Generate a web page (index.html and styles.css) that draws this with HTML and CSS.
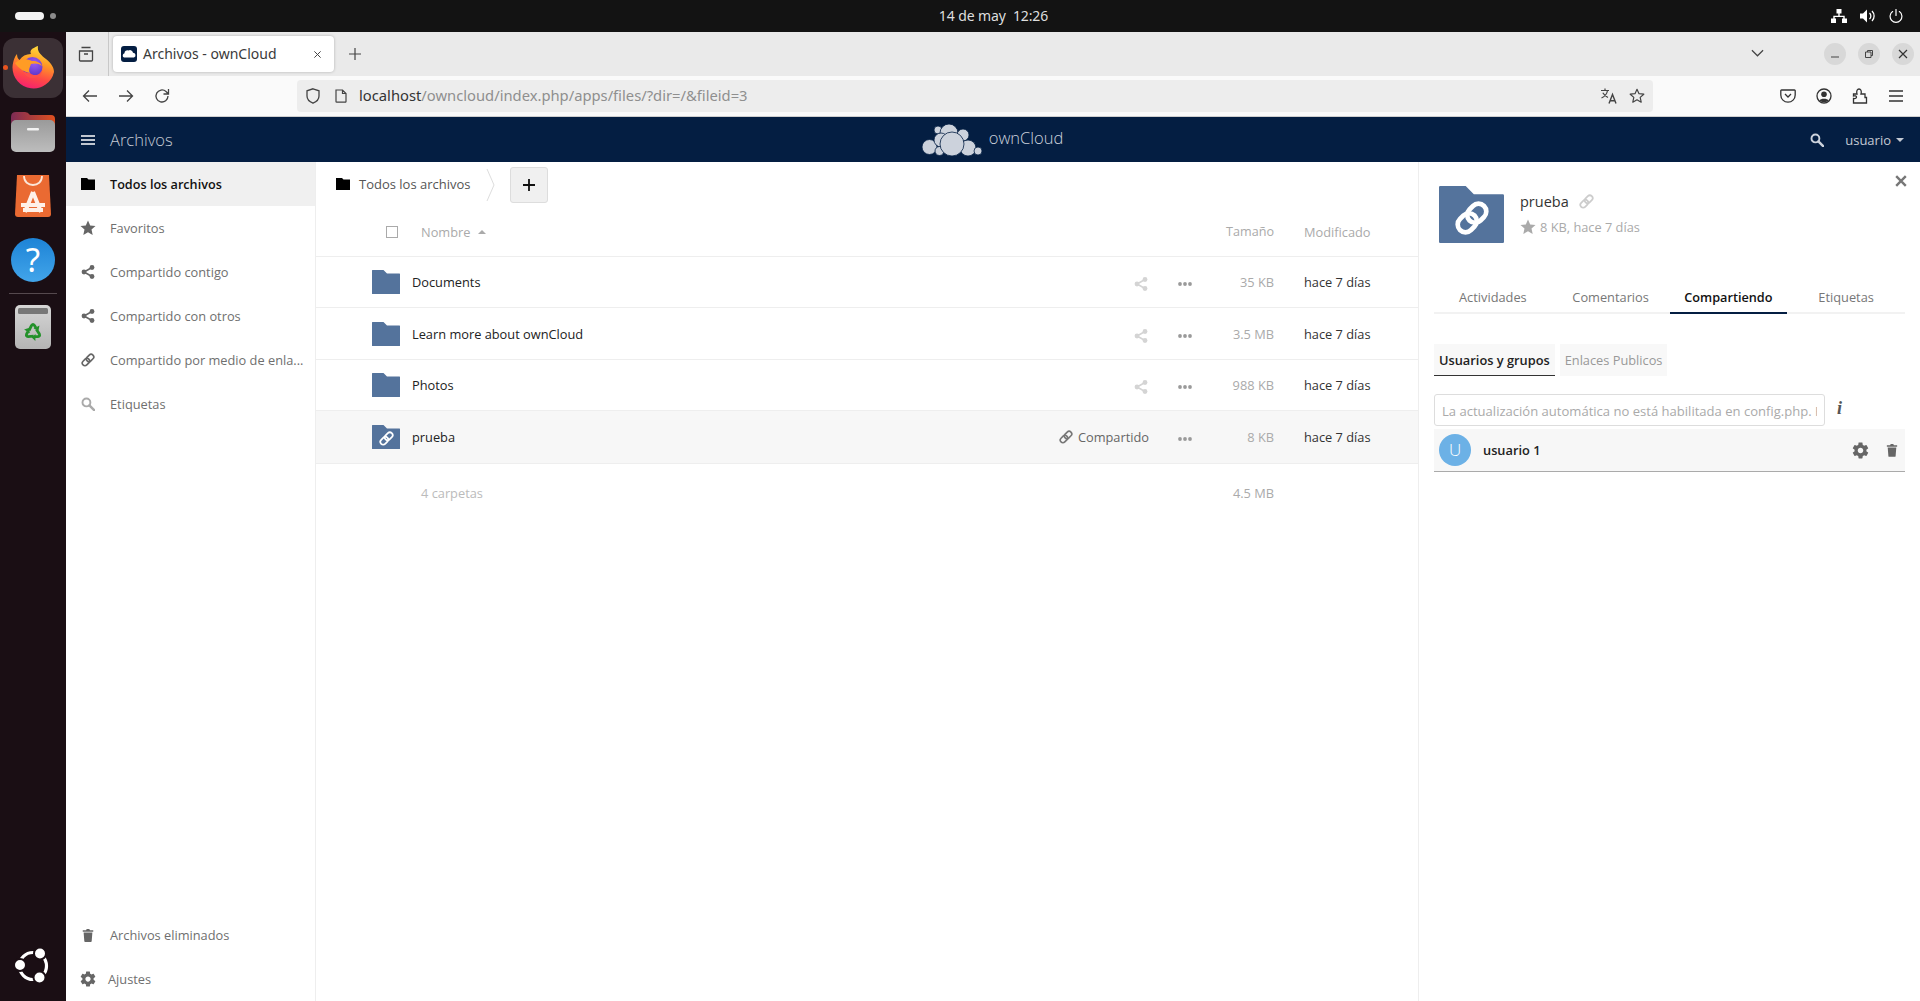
FILE: index.html
```html
<!DOCTYPE html>
<html lang="es">
<head>
<meta charset="utf-8">
<title>Archivos - ownCloud</title>
<link rel="stylesheet" href="styles.css">
</head>
<body>
<svg class="defs" width="0" height="0">
  <defs>
    <symbol id="i-folder" viewBox="0 0 14 12"><path d="M0 0H6L7.5 1.5H14V12H0Z" fill="currentColor"/></symbol>
    <symbol id="i-star" viewBox="0 0 16 16"><path d="M8 .5l2.2 5 5.3.5-4 3.6 1.2 5.4L8 12.2 3.3 15l1.2-5.4-4-3.6 5.3-.5Z" fill="currentColor"/></symbol>
    <symbol id="i-share" viewBox="0 0 14 14"><path d="M11 2.5 3 7l8 4.5" fill="none" stroke="currentColor" stroke-width="1.6"/><circle cx="11" cy="2.5" r="2.4" fill="currentColor"/><circle cx="3" cy="7" r="2.4" fill="currentColor"/><circle cx="11" cy="11.5" r="2.4" fill="currentColor"/></symbol>
    <symbol id="i-link" viewBox="0 0 24 24"><g transform="rotate(-45 12 12)" fill="none" stroke="currentColor" stroke-width="2.8"><rect x="0" y="7.5" width="14" height="9" rx="4.5"/><rect x="10" y="7.5" width="14" height="9" rx="4.5"/></g></symbol>
    <symbol id="i-link-bold" viewBox="0 0 24 24"><g transform="rotate(-45 12 12)" fill="none" stroke="currentColor" stroke-width="3.300"><rect x="0" y="6.500" width="14.500" height="11" rx="5.500"/><rect x="9.500" y="6.500" width="14.500" height="11" rx="5.500"/></g></symbol>
    <symbol id="i-search" viewBox="0 0 16 16"><circle cx="6.2" cy="6.2" r="4.5" fill="none" stroke="currentColor" stroke-width="2.2"/><path d="M9.6 9.6 15 15" stroke="currentColor" stroke-width="2.8" stroke-linecap="round"/></symbol>
    <symbol id="i-trash" viewBox="0 0 14 16"><path d="M1 2.5H4.8L5.5 1H8.5L9.2 2.5H13V4.2H1ZM2 5.2H12L11.2 15.2Q11.1 16 10.3 16H3.7Q2.9 16 2.8 15.2Z" fill="currentColor"/></symbol>
    <symbol id="i-gear" viewBox="0 0 24 24"><path d="M19.43 12.98c.04-.32.07-.64.07-.98s-.03-.66-.07-.98l2.11-1.65c.19-.15.24-.42.12-.64l-2-3.46c-.12-.22-.39-.3-.61-.22l-2.49 1c-.52-.4-1.08-.73-1.69-.98l-.38-2.65C14.46 2.18 14.25 2 14 2h-4c-.25 0-.46.18-.49.42l-.38 2.65c-.61.25-1.17.59-1.69.98l-2.49-1c-.23-.09-.49 0-.61.22l-2 3.46c-.13.22-.07.49.12.64l2.11 1.65c-.04.32-.07.65-.07.98s.03.66.07.98l-2.11 1.65c-.19.15-.24.42-.12.64l2 3.46c.12.22.39.3.61.22l2.49-1c.52.4 1.08.73 1.69.98l.38 2.65c.03.24.24.42.49.42h4c.25 0 .46-.18.49-.42l.38-2.65c.61-.25 1.17-.59 1.69-.98l2.49 1c.23.09.49 0 .61-.22l2-3.46c.12-.22.07-.49-.12-.64l-2.11-1.65zM12 15.5c-1.93 0-3.5-1.57-3.5-3.5s1.57-3.5 3.5-3.5 3.5 1.57 3.5 3.5-1.57 3.5-3.5 3.5z" fill="currentColor"/></symbol>
    <symbol id="i-dots" viewBox="0 0 14 4"><circle cx="2" cy="2" r="1.9" fill="currentColor"/><circle cx="7" cy="2" r="1.9" fill="currentColor"/><circle cx="12" cy="2" r="1.9" fill="currentColor"/></symbol>
    <symbol id="i-bigfolder" viewBox="0 0 28 24" preserveAspectRatio="none"><path d="M0 .5Q0 0 .5 0H11.5L15 3.5H27.5Q28 3.5 28 4V23.5Q28 24 27.5 24H.5Q0 24 0 23.5Z" fill="#54739c"/></symbol>
    <symbol id="i-recycle-arm" viewBox="0 0 20 20"><path d="M6 8.500 8.500 3.500Q10 1.500 11.500 3.500L13 6" fill="none" stroke="#23912a" stroke-width="2.800"/><path d="M10.500 6.800 15.500 8.300 16.500 3.500Z" fill="#23912a"/></symbol>
    <linearGradient id="ff-body" x1=".7" y1="0" x2=".4" y2="1"><stop offset="0" stop-color="#ffe23f"/><stop offset=".38" stop-color="#ff9a25"/><stop offset=".72" stop-color="#ff4a45"/><stop offset="1" stop-color="#f5216f"/></linearGradient>
    <radialGradient id="ff-globe" cx=".6" cy=".3" r=".85"><stop offset="0" stop-color="#9c5cf5"/><stop offset="1" stop-color="#4a2ab8"/></radialGradient>
    <linearGradient id="files-back" x1="0" y1="0" x2="1" y2="0"><stop offset="0" stop-color="#7c2b55"/><stop offset="1" stop-color="#e0501f"/></linearGradient>
    <linearGradient id="files-front" x1="0" y1="0" x2="0" y2="1"><stop offset="0" stop-color="#9a9a9a"/><stop offset="1" stop-color="#bdbdbd"/></linearGradient>
    <linearGradient id="bin-bg" x1="0" y1="0" x2="0" y2="1"><stop offset="0" stop-color="#d6d6d6"/><stop offset="1" stop-color="#b4b4b4"/></linearGradient>
  </defs>
</svg>

<header class="topbar">
  <div class="workspaces"><span class="ws-pill"></span><span class="ws-dot"></span></div>
  <div class="clock">14 de may&nbsp;&nbsp;12:26</div>
  <div class="tray">
    <svg class="tray-net" viewBox="0 0 16 14"><path d="M5.5 0h5v4.5h-5ZM0 9.5h5V14H0ZM11 9.5h5V14h-5ZM7.3 4.5h1.4v2.2h5V9.5h-1.4V8H3.7v1.5H2.3V6.7h5Z" fill="#fff"/></svg>
    <svg class="tray-vol" viewBox="0 0 16 14"><path d="M0 4.5H3L7 .5V13.500L3 9.500H0Z" fill="#fff"/><path d="M9.500 4a4 4 0 0 1 0 6M12 2a7 7 0 0 1 0 10" fill="none" stroke="#fff" stroke-width="1.300"/></svg>
    <svg class="tray-pow" viewBox="0 0 14 14"><path d="M7 .5V6.500M3.600 2.600a5.900 5.900 0 1 0 6.800 0" fill="none" stroke="#fff" stroke-width="1.200" stroke-linecap="round"/></svg>
  </div>
</header>

<div class="desktop">
  <nav class="dock">
    <div class="dock-active">
      <span class="dock-run"></span>
      <svg class="dock-ff" viewBox="0 0 44 44">
        <path d="M1.500 21C2 15 4 10 6 8C6 11 7 13 8.500 14C11 10 15 8 20 8C18 4 22 2 27 0C26 6 30 9 35 13C41 18 43 22 43 26A21 21 0 0 1 1.500 21Z" fill="url(#ff-body)"/>
        <circle cx="21.500" cy="21" r="10" fill="url(#ff-globe)"/>
        <path d="M4 17C8 13 15 12 21 15C26 15 30 17 31 20C28 17 23 17 20 18C19 21 17 24 19 27C13 26 7 22 4 17Z" fill="#ff9c25"/>
        <path d="M19 27C23 31 30 29 31.500 23C31 29 27 32 22 32C17 32 13 29 12 25C14 26 17 27 19 27Z" fill="#ff4f4a"/>
      </svg>
    </div>
    <svg class="dock-files" viewBox="0 0 44 40"><path d="M0 5Q0 0 5 0H14Q17 0 19 3H40Q44 3 44 7V16H0Z" fill="url(#files-back)"/><rect y="8" width="44" height="32" rx="5" fill="url(#files-front)"/><rect x="16" y="16" width="12" height="2.500" rx="1" fill="#f2f2f2"/></svg>
    <svg class="dock-store" viewBox="0 0 36 42"><path d="M2 0H34L36 39Q36 42 33 42H3Q0 42 0 39Z" fill="#ea6a32"/><path d="M9 1C9 13 27 13 27 1" fill="none" stroke="#fbe6d8" stroke-width="1.800"/><path d="M18 17 26 37M18 17 10 37M6 30H30M8 35H28" fill="none" stroke="#fff1e8" stroke-width="4"/></svg>
    <div class="dock-help">?</div>
    <div class="dock-sep"></div>
    <svg class="dock-bin" viewBox="0 0 36 44">
      <rect width="36" height="44" rx="5" fill="url(#bin-bg)"/>
      <rect x="3" y="3" width="30" height="6" rx="1.500" fill="#777"/>
      <use href="#i-recycle-arm" x="8" y="17" width="20" height="20"/>
      <use href="#i-recycle-arm" x="8" y="17" width="20" height="20" transform="rotate(120 18 27)"/>
      <use href="#i-recycle-arm" x="8" y="17" width="20" height="20" transform="rotate(240 18 27)"/>
    </svg>
    <svg class="dock-ubuntu" viewBox="0 0 36 36"><circle cx="18" cy="18" r="13.500" fill="none" stroke="#fff" stroke-width="3.200"/><circle cx="25" cy="5.500" r="6" fill="#fff" stroke="#1a0e14" stroke-width="2"/><circle cx="24.500" cy="29.500" r="6" fill="#fff" stroke="#1a0e14" stroke-width="2"/><circle cx="5" cy="17" r="6" fill="#fff" stroke="#1a0e14" stroke-width="2"/></svg>
  </nav>

  <main class="browser">
    <div class="tabbar">
      <div class="view-btn">
        <svg class="ic16" viewBox="0 0 16 16"><path d="M3.500 1.500h9M1.500 5h13v9a1 1 0 0 1-1 1h-11a1 1 0 0 1-1-1ZM6 8h4" fill="none" stroke="#444" stroke-width="1.300"/></svg>
      </div>
      <div class="tab">
        <svg class="favicon" viewBox="0 0 16 16"><rect width="16" height="16" rx="3" fill="#041e42"/><path d="M3 11.500a2.300 2.300 0 0 1 .5-4.300 2.800 2.800 0 0 1 4-2.700 3 3 0 0 1 4.500 2.200 2.500 2.500 0 0 1 1 4.800Z" fill="#fff"/></svg>
        <span class="tab-title">Archivos - ownCloud</span>
        <svg class="tab-x" viewBox="0 0 10 10"><path d="M1.500 1.500l7 7M8.500 1.500l-7 7" stroke="#444" stroke-width="1.100"/></svg>
      </div>
      <svg class="tab-new" viewBox="0 0 12 12"><path d="M6 0v12M0 6h12" stroke="#444" stroke-width="1.200"/></svg>
      <svg class="tab-list" viewBox="0 0 14 8"><path d="M1 1l6 6 6-6" fill="none" stroke="#444" stroke-width="1.300"/></svg>
      <div class="win-btns">
        <span class="win-btn"><svg viewBox="0 0 10 10"><path d="M1 8h8" stroke="#444" stroke-width="1"/></svg></span>
        <span class="win-btn"><svg viewBox="0 0 10 10"><path d="M1.500 3h5.500v5.500H1.500ZM3.500 3V1.500H8.500V6.500H7" fill="none" stroke="#444" stroke-width="1"/></svg></span>
        <span class="win-btn"><svg viewBox="0 0 10 10"><path d="M1 1l8 8M9 1l-8 8" stroke="#333" stroke-width="1.200"/></svg></span>
      </div>
    </div>

    <div class="toolbar">
      <svg class="tb-ic" viewBox="0 0 16 16"><path d="M15 8H1.500M7 2.500 1.500 8 7 13.500" fill="none" stroke="#444" stroke-width="1.300"/></svg>
      <svg class="tb-ic" viewBox="0 0 16 16"><path d="M1 8h13.500M9 2.500 14.500 8 9 13.500" fill="none" stroke="#444" stroke-width="1.300"/></svg>
      <svg class="tb-ic" viewBox="0 0 16 16"><path d="M14 8a6 6 0 1 1-2-4.500L14.500 6M14.500 1V6H9.500" fill="none" stroke="#444" stroke-width="1.300"/></svg>
      <div class="urlbar">
        <svg class="url-shield" viewBox="0 0 14 16"><path d="M7 .8 13 2.800V8c0 3.500-3 6-6 7.200C4 14 1 11.500 1 8V2.800Z" fill="none" stroke="#444" stroke-width="1.300"/></svg>
        <svg class="url-page" viewBox="0 0 12 14"><path d="M1 1H7.500L11 4.500V12.500a.7.7 0 0 1-.7.7H1.700A.7.7 0 0 1 1 12.500ZM7.500 1V4.500H11" fill="none" stroke="#444" stroke-width="1.200"/></svg>
        <span class="url-text"><span class="url-host">localhost</span>/owncloud/index.php/apps/files/?dir=/&amp;fileid=3</span>
        <svg class="url-trans" viewBox="0 0 16 16"><path d="M0 2.500H8M4 .5V2.500M6.500 2.500C6 6 3.500 8.500.5 10M1.800 4.800C3 7 5 8.500 7 9.500" fill="none" stroke="#444" stroke-width="1.200"/><path d="M8 15.500 11.500 6.500 15 15.500M9.200 12.800H13.800" fill="none" stroke="#444" stroke-width="1.400"/></svg>
        <svg class="url-star" viewBox="0 0 16 16"><path d="M8 1.300l2 4.400 4.800.5-3.600 3.200 1 4.800L8 11.800l-4.200 2.400 1-4.800L1.200 6.200 6 5.700Z" fill="none" stroke="#444" stroke-width="1.200" stroke-linejoin="round"/></svg>
      </div>
      <div class="tb-right">
        <svg class="tb-ic" viewBox="0 0 16 16"><path d="M1.500 2H14.500a.7.7 0 0 1 .7.7V7A7.200 7.200 0 0 1 .8 7V2.700A.7.700 0 0 1 1.500 2Z" fill="none" stroke="#333" stroke-width="1.300"/><path d="M5 6l3 3 3-3" fill="none" stroke="#333" stroke-width="1.300"/></svg>
        <svg class="tb-ic" viewBox="0 0 16 16"><circle cx="8" cy="8" r="7" fill="none" stroke="#333" stroke-width="1.300"/><circle cx="8" cy="6.300" r="2.800" fill="#333"/><path d="M3.300 12.500C4.500 10 11.500 10 12.700 12.500 11 14.500 5 14.500 3.300 12.500Z" fill="#333"/></svg>
        <svg class="tb-ic" viewBox="0 0 16 16"><path d="M1.500 6H5C4 2.500 5.500 1 7 1s3 1.500 2 5h4v3.500h1.500V15H1.500V10.500C3.500 11 4.500 10 4.500 9S3 7.500 1.500 8Z" fill="none" stroke="#333" stroke-width="1.300"/></svg>
        <svg class="tb-ic" viewBox="0 0 16 16"><path d="M1 3h14M1 8h14M1 13h14" stroke="#333" stroke-width="1.300"/></svg>
      </div>
    </div>

    <div class="oc-header">
      <svg class="oc-burger" viewBox="0 0 14 10"><path d="M0 1h14M0 5h14M0 9h14" stroke="#fff" stroke-width="1.700"/></svg>
      <span class="oc-app">Archivos</span>
      <div class="oc-logo">
        <svg class="oc-cloud" viewBox="0 0 62 32">
          <g fill="#ccd2dc" stroke="#041e42" stroke-width=".8">
            <circle cx="16" cy="6" r="4"/><circle cx="27" cy="9" r="9"/><circle cx="41" cy="11" r="6"/>
            <circle cx="7.500" cy="23" r="7.500"/><circle cx="19" cy="16" r="7"/><circle cx="17.500" cy="27" r="4.500"/>
            <circle cx="46" cy="24" r="8"/><circle cx="56" cy="27" r="4"/><circle cx="30" cy="20" r="12"/>
          </g>
        </svg>
        <span class="oc-brand">ownCloud</span>
      </div>
      <div class="oc-user">
        <svg class="oc-search" viewBox="0 0 16 16"><use href="#i-search"/></svg>
        <span class="oc-username">usuario</span>
        <span class="caret-down"></span>
      </div>
    </div>

    <div class="oc-body">
      <aside class="side">
        <ul class="nav">
          <li class="nav-item active"><svg class="nav-ic ic-folder"><use href="#i-folder"/></svg><span>Todos los archivos</span></li>
          <li class="nav-item"><svg class="nav-ic nav-ic-star"><use href="#i-star"/></svg><span>Favoritos</span></li>
          <li class="nav-item"><svg class="nav-ic"><use href="#i-share"/></svg><span>Compartido contigo</span></li>
          <li class="nav-item"><svg class="nav-ic"><use href="#i-share"/></svg><span>Compartido con otros</span></li>
          <li class="nav-item"><svg class="nav-ic"><use href="#i-link"/></svg><span class="nav-trunc">Compartido por medio de enla...</span></li>
          <li class="nav-item"><svg class="nav-ic ic-faint"><use href="#i-search"/></svg><span>Etiquetas</span></li>
        </ul>
        <ul class="nav">
          <li class="nav-item"><svg class="nav-ic"><use href="#i-trash"/></svg><span>Archivos eliminados</span></li>
          <li class="nav-item nav-settings"><svg class="nav-ic nav-ic-gear"><use href="#i-gear"/></svg><span>Ajustes</span></li>
        </ul>
      </aside>

      <section class="files">
        <div class="crumbs">
          <svg class="crumb-ic"><use href="#i-folder"/></svg>
          <span class="crumb-text">Todos los archivos</span>
          <svg class="crumb-sep" viewBox="0 0 9 34"><path d="M1 1 8 17 1 33" fill="none" stroke="#ddd" stroke-width="1"/></svg>
          <button class="add-btn" type="button"><svg viewBox="0 0 12 12"><path d="M6 0v12M0 6h12" stroke="#111" stroke-width="1.800"/></svg></button>
        </div>
        <div class="thead">
          <span class="check"></span>
          <span class="th-name">Nombre</span><span class="caret-up"></span>
          <span class="th-size">Tamaño</span>
          <span class="th-date">Modificado</span>
        </div>
        <div class="rows">
          <div class="row">
            <svg class="row-folder"><use href="#i-bigfolder"/></svg>
            <span class="row-name">Documents</span>
            <svg class="row-share"><use href="#i-share"/></svg>
            <svg class="row-dots"><use href="#i-dots"/></svg>
            <span class="row-size">35 KB</span>
            <span class="row-date">hace 7 días</span>
          </div>
          <div class="row">
            <svg class="row-folder"><use href="#i-bigfolder"/></svg>
            <span class="row-name">Learn more about ownCloud</span>
            <svg class="row-share"><use href="#i-share"/></svg>
            <svg class="row-dots"><use href="#i-dots"/></svg>
            <span class="row-size">3.5 MB</span>
            <span class="row-date">hace 7 días</span>
          </div>
          <div class="row">
            <svg class="row-folder"><use href="#i-bigfolder"/></svg>
            <span class="row-name">Photos</span>
            <svg class="row-share"><use href="#i-share"/></svg>
            <svg class="row-dots"><use href="#i-dots"/></svg>
            <span class="row-size">988 KB</span>
            <span class="row-date">hace 7 días</span>
          </div>
          <div class="row row-selected">
            <span class="row-folder folder-linked">
              <svg class="row-folder"><use href="#i-bigfolder"/></svg>
              <svg class="folder-chain"><use href="#i-link"/></svg>
            </span>
            <span class="row-name">prueba</span>
            <span class="row-shared"><svg class="shared-ic"><use href="#i-link"/></svg>Compartido</span>
            <svg class="row-dots"><use href="#i-dots"/></svg>
            <span class="row-size">8 KB</span>
            <span class="row-date">hace 7 días</span>
          </div>
        </div>
        <div class="tfoot">
          <span class="foot-name">4 carpetas</span>
          <span class="foot-size">4.5 MB</span>
        </div>
      </section>

      <aside class="details">
        <div class="det-head">
          <span class="det-folder">
            <svg class="det-folder-svg"><use href="#i-bigfolder"/></svg>
            <svg class="det-chain"><use href="#i-link-bold"/></svg>
          </span>
          <div class="det-info">
            <div class="det-title"><span>prueba</span><svg class="det-title-link"><use href="#i-link"/></svg></div>
            <div class="det-meta"><svg class="det-star"><use href="#i-star"/></svg><span>8 KB, hace 7 días</span></div>
          </div>
          <svg class="det-close" viewBox="0 0 10 10"><path d="M1 1l8 8M9 1l-8 8" stroke="#777" stroke-width="2"/></svg>
        </div>
        <div class="det-tabs">
          <span class="det-tab">Actividades</span>
          <span class="det-tab">Comentarios</span>
          <span class="det-tab on">Compartiendo</span>
          <span class="det-tab">Etiquetas</span>
        </div>
        <div class="sub-tabs">
          <span class="sub-tab on">Usuarios y grupos</span>
          <span class="sub-tab">Enlaces Publicos</span>
        </div>
        <div class="share-input-row">
          <input class="share-input" type="text" placeholder="La actualización automática no está habilitada en config.php. Para activarla">
          <span class="share-info">i</span>
        </div>
        <div class="sharee">
          <span class="avatar">U</span>
          <span class="sharee-name">usuario 1</span>
          <svg class="sharee-gear"><use href="#i-gear"/></svg>
          <svg class="sharee-trash"><use href="#i-trash"/></svg>
        </div>
      </aside>
    </div>
  </main>
</div>
</body>
</html>
```
FILE: styles.css
```css
* { box-sizing: border-box; }
html, body { margin: 0; padding: 0; height: 1001px; overflow: hidden; }
body { display: flex; flex-direction: column; font-family: "Open Sans", "Noto Sans", sans-serif; background: #fff; }
ul { list-style: none; margin: 0; padding: 0; }
.defs { display: block; height: 0; width: 0; overflow: hidden; }

/* GNOME top bar */
.topbar { height: 32px; flex: none; background: #131313; display: grid; grid-template-columns: 1fr auto 1fr; align-items: center; padding: 0 17px 0 66px; }
.workspaces { display: flex; align-items: center; gap: 6px; margin-left: -51px; }
.ws-pill { width: 29px; height: 8px; border-radius: 4px; background: #f4f4f4; }
.ws-dot { width: 6px; height: 6px; border-radius: 50%; background: #8c8c8c; }
.clock { font-family: "Noto Sans", sans-serif; font-size: 14px; color: #dedede; letter-spacing: -.1px; margin: 0 0 2px 18px; }
.tray { display: flex; justify-content: flex-end; align-items: center; gap: 13px; }
.tray-net { width: 16px; height: 14px; }
.tray-vol { width: 16px; height: 14px; }
.tray-pow { width: 14px; height: 14px; }

.desktop { flex: 1; display: flex; min-height: 0; }

/* Dock */
.dock { width: 66px; flex: none; background: #1a0e14; display: flex; flex-direction: column; align-items: center; padding-top: 6px; }
.dock-active { position: relative; width: 60px; height: 60px; border-radius: 12px; background: #3b3035; display: flex; align-items: center; justify-content: center; }
.dock-run { position: absolute; left: 0; top: 27px; width: 5px; height: 5px; border-radius: 50%; background: #e95420; }
.dock-ff { width: 44px; height: 44px; }
.dock-files { width: 44px; height: 40px; margin-top: 14px; }
.dock-store { width: 36px; height: 42px; margin-top: 23px; }
.dock-help { width: 44px; height: 44px; margin-top: 21px; border-radius: 50%; background: linear-gradient(#1d83d6, #42a5ea); color: #fff; font-family: "Noto Sans", sans-serif; font-size: 33px; line-height: 44px; text-align: center; }
.dock-sep { width: 48px; height: 1px; margin-top: 11px; background: #55494e; }
.dock-bin { width: 36px; height: 44px; margin-top: 11px; }
.dock-ubuntu { width: 36px; height: 36px; margin-top: auto; margin-bottom: 17px; }

/* Browser chrome */
.browser { flex: 1; min-width: 0; display: flex; flex-direction: column; }
.tabbar { height: 44px; flex: none; background: #eaeaea; display: flex; align-items: center; }
.view-btn { width: 43px; height: 44px; border-right: 1px solid #c8c8c8; display: flex; align-items: center; justify-content: center; padding-right: 2px; }
.ic16 { width: 16px; height: 16px; }
.tab { width: 221px; height: 36px; margin-left: 4px; background: #fff; border-radius: 4px; box-shadow: 0 0 3px rgba(0,0,0,.25); display: flex; align-items: center; padding: 0 12px 0 8px; }
.favicon { width: 16px; height: 16px; flex: none; }
.tab-title { margin-left: 6px; margin-bottom: 2px; flex: 1; font-family: "Noto Sans", sans-serif; font-size: 14px; color: #3a3a3a; }
.tab-x { width: 9px; height: 9px; }
.tab-new { width: 12px; height: 12px; margin-left: 15px; }
.tab-list { width: 13px; height: 8px; margin-left: auto; margin-bottom: 2px; }
.win-btns { display: flex; gap: 12px; margin: 0 6px 0 60px; }
.win-btn { width: 22px; height: 22px; border-radius: 50%; background: #d8d8d8; display: flex; align-items: center; justify-content: center; }
.win-btn svg { width: 10px; height: 10px; }

.toolbar { height: 41px; flex: none; background: #fafafa; border-bottom: 1px solid #cfcfcf; display: flex; align-items: center; padding: 0 16px 1px 16px; }
.tb-ic { width: 16px; height: 16px; flex: none; }
.toolbar > .tb-ic { margin-right: 20px; }
.urlbar { width: 1356px; height: 32px; margin-left: 107px; background: #ededed; border-radius: 4px; display: flex; align-items: center; padding: 0 8px 0 9px; }
.url-shield { width: 14px; height: 16px; }
.url-page { width: 12px; height: 14px; margin-left: 15px; }
.url-text { margin: 0 0 2px 12px; flex: 1; font-family: "Noto Sans", sans-serif; font-size: 14.750px; color: #8f8f8f; }
.url-host { color: #333; }
.url-trans { width: 16px; height: 16px; }
.url-star { width: 16px; height: 16px; margin-left: 12px; }
.tb-right { display: flex; gap: 20px; margin-left: auto; }

/* ownCloud header */
.oc-header { height: 45px; flex: none; background: #041e42; display: grid; grid-template-columns: 1fr auto 1fr; align-items: center; padding: 0 16px 0 15px; }
.oc-burger { width: 14px; height: 10px; grid-column: 1; grid-row: 1; }
.oc-app { grid-column: 1; grid-row: 1; margin-left: 29px; font-size: 16.500px; font-weight: 300; color: #c4cad4; }
.oc-logo { grid-column: 2; grid-row: 1; display: flex; align-items: center; gap: 5px; }
.oc-cloud { width: 62px; height: 32px; }
.oc-brand { font-size: 16.500px; font-weight: 300; color: #ccd2dc; margin-bottom: 4px; }
.oc-user { grid-column: 3; grid-row: 1; display: flex; align-items: center; justify-content: flex-end; color: #c4cad4; }
.oc-search { width: 14px; height: 14px; color: #ccd2dc; margin-right: 21px; }
.oc-username { font-size: 13px; }
.caret-down { width: 0; height: 0; border: 4px solid transparent; border-top-color: #c4cad4; border-bottom: 0; margin-left: 5px; }

/* ownCloud body */
.oc-body { flex: 1; min-height: 0; display: flex; }
.side { width: 250px; flex: none; border-right: 1px solid #eee; display: flex; flex-direction: column; justify-content: space-between; }
.nav-item { height: 44px; display: flex; align-items: center; padding-left: 15px; font-size: 12.800px; color: #6f6f6f; }
.nav-item > span { margin-left: 15px; white-space: nowrap; }
.nav-item.active { background: #f0f0f0; color: #111; font-weight: 600; font-size: 12.650px; }
.nav-ic { width: 14px; height: 14px; flex: none; color: #666; }
.nav-item.active .nav-ic { color: #000; }
.nav-ic-star { width: 16px; height: 16px; margin: 0 -1px; }
.nav-ic-gear { width: 18px; height: 18px; margin: 0 -2px; }
.ic-faint { color: #aaa; }
.nav-settings > span { margin-left: 13px; }

.files { flex: 1; min-width: 0; display: flex; flex-direction: column; }
.crumbs { height: 44px; display: flex; align-items: center; padding-left: 20px; flex: none; }
.crumb-ic { width: 14px; height: 12px; color: #000; }
.crumb-text { margin-left: 9px; font-weight: 500; font-size: 13px; color: #555; }
.crumb-sep { width: 9px; height: 34px; margin-left: 15px; margin-top: 2px; }
.add-btn { width: 38px; height: 36px; margin-left: 15px; margin-top: 2px; padding: 0; background: #f0f0f0; border: 1px solid #ddd; border-radius: 3px; display: flex; align-items: center; justify-content: center; }
.add-btn svg { width: 12px; height: 12px; }
.thead { height: 51px; flex: none; border-bottom: 1px solid #eee; display: flex; align-items: center; padding: 1px 0 0 70px; font-size: 12.800px; color: #aaa; }
.check { width: 12px; height: 12px; border: 1px solid #aaa; background: #fff; }
.th-name { margin-left: 23px; }
.caret-up { width: 0; height: 0; border: 4px solid transparent; border-bottom-color: #aaa; border-top: 0; margin-left: 8px; }
.th-size { margin-left: auto; font-size: 12.600px; }
.th-date { width: 144px; padding-left: 30px; }

.rows { display: grid; grid-template-rows: 51px 52px 51px 53px; flex: none; }
.row { display: flex; align-items: center; padding-left: 56px; border-bottom: 1px solid #eee; font-size: 12.800px; }
.row-selected { background: #f7f7f7; }
.row-folder { width: 28px; height: 24px; flex: none; display: block; position: relative; }
.folder-chain { position: absolute; left: 7px; top: 6px; width: 15px; height: 15px; color: #fff; }
.row-name { margin-left: 12px; flex: 1; color: #222; }
.row-share { width: 14px; height: 14px; color: #d4d4d4; margin: 4px 30px 0 0; }
.row-shared { display: flex; align-items: center; color: #666; margin-right: 29px; gap: 5px; }
.shared-ic { width: 14px; height: 14px; color: #777; }
.row-dots { width: 14px; height: 4px; color: #9a9a9a; margin-top: 4px; }
.row-size { width: 82px; text-align: right; color: #aaa; }
.row-date { width: 144px; padding-left: 30px; color: #333; }
.tfoot { height: 57px; flex: none; display: flex; align-items: center; padding-left: 105px; font-size: 12.800px; color: #bbb; }
.foot-size { margin-left: auto; margin-right: 144px; color: #aaa; }

/* Details */
.details { width: 502px; flex: none; border-left: 1px solid #eee; padding: 0 15px; display: flex; flex-direction: column; }
.det-head { height: 117px; flex: none; display: flex; align-items: flex-start; padding-top: 24px; position: relative; }
.det-folder { width: 65px; height: 57px; margin-left: 5px; position: relative; flex: none; display: block; }
.det-folder-svg { width: 65px; height: 57px; display: block; }
.det-chain { position: absolute; left: 16px; top: 15px; width: 34px; height: 34px; color: #fff; }
.det-info { margin-left: 16px; }
.det-title { display: flex; align-items: center; height: 30px; font-size: 14.500px; color: #333; }
.det-title-link { width: 15px; height: 15px; margin-left: 10px; color: #ccc; }
.det-meta { display: flex; align-items: center; font-size: 12.800px; color: #aaa; margin-top: 2px; }
.det-star { width: 16px; height: 16px; color: #aaa; margin-right: 4px; }
.det-close { position: absolute; right: -2px; top: 13px; width: 12px; height: 12px; }
.det-tabs { display: grid; grid-template-columns: repeat(4, 1fr); height: 35px; flex: none; border-bottom: 2px solid #f2f2f2; font-size: 12.800px; color: #777; }
.det-tab { display: block; text-align: center; padding-top: 9px; height: 35px; }
.det-tab.on { color: #111; font-weight: 600; font-size: 12.700px; border-bottom: 2px solid #041e42; }
.sub-tabs { display: flex; gap: 5px; margin-top: 30px; height: 32px; flex: none; font-size: 12.800px; color: #999; }
.sub-tab { background: #f8f8f8; padding: 0 5px; display: flex; align-items: center; }
.sub-tab.on { color: #222; font-weight: 600; border-bottom: 1px solid #333; }
.share-input-row { display: flex; align-items: center; margin-top: 18px; height: 32px; flex: none; }
.share-input { width: 391px; height: 32px; border: 1px solid #ddd; border-radius: 3px; padding: 2px 7px 0; font-family: "Open Sans", sans-serif; font-size: 13.050px; background: #fff; }
.share-input::placeholder { color: #aaa; opacity: 1; }
.share-info { margin-left: 12px; margin-bottom: 4px; font-family: "Liberation Serif", serif; font-style: italic; font-weight: 700; font-size: 18px; color: #555; }
.sharee { height: 43px; margin-top: 3px; flex: none; background: #f7f7f7; border-bottom: 1px solid #aaa; display: flex; align-items: center; padding: 0 5px; }
.avatar { width: 32px; height: 32px; border-radius: 50%; background: #6cb1e6; color: #fff; font-size: 17px; font-weight: 300; text-align: center; line-height: 32px; }
.sharee-name { margin-left: 12px; flex: 1; font-size: 12.800px; font-weight: 600; color: #222; }
.sharee-gear { width: 19px; height: 19px; color: #666; }
.sharee-trash { width: 12px; height: 14px; color: #666; margin-left: 16px; margin-right: 2px; }
```
